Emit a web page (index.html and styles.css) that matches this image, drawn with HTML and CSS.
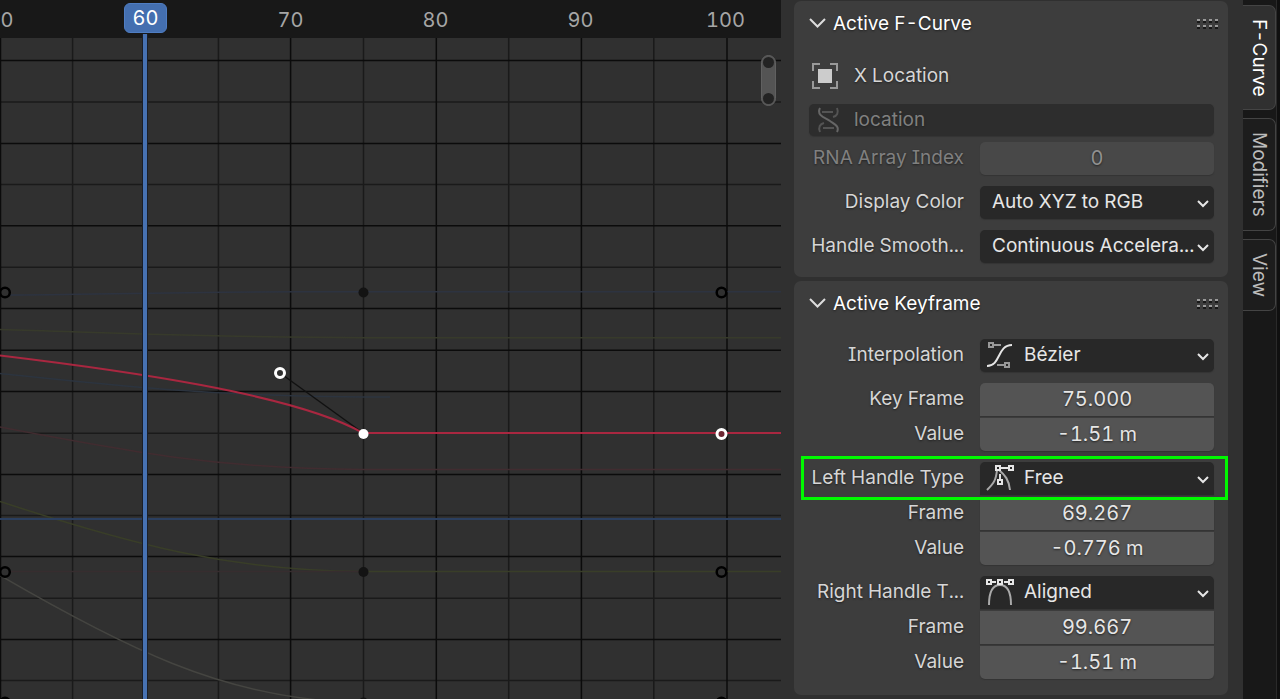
FILE: index.html
```html
<!DOCTYPE html>
<html lang="en">
<head>
<meta charset="utf-8">
<title>Graph Editor</title>
<link rel="stylesheet" href="styles.css">
</head>
<body>
<main class="editor">
  <section class="graph" aria-label="F-Curve graph">
    <svg class="plot" aria-hidden="true">
      <g stroke="#1a1a1a" stroke-width="1.500">
        <path d="M0 102H2000M0 184.500H2000M0 267.300H2000M0 433.300H2000M0 515.500H2000M0 598.300H2000M0 680.500H2000M72.600 38V1200M218.400 38V1200M363.500 38V1200M508.700 38V1200M653.800 38V1200"/>
      </g>
      <g stroke="#0b0b0b" stroke-width="1.500">
        <path d="M0 60.500H2000M0 143.400H2000M0 225.700H2000M0 308.500H2000M0 350.300H2000M0 391.600H2000M0 474.400H2000M0 556.600H2000M0 639.400H2000M.5 38V1200M290.600 38V1200M436.300 38V1200M581.400 38V1200M727 38V1200"/>
      </g>
      <g fill="none" stroke-width="1.500">
        <path stroke="#2d3340" d="M0 295C90 295 150 292 300 291.800H2000"/>
        <path stroke="#373a2b" d="M0 329.500C120 333 220 337.500 363 337.700H2000"/>
        <path stroke="#2c343f" d="M0 373.500C90 383 200 396 363 397H390"/>
        <path stroke="#412c30" d="M0 427C130 452 220 469 363 469.500H2000"/>
        <path stroke="#393e28" d="M0 501.500C130 544 230 571 363 571.500H2000"/>
        <path stroke="#372d2f" d="M8 571.500H363"/>
        <path stroke="#454541" d="M0 575.500C130 651 220 693 330 701"/>
        <path stroke="#2b3f5f" stroke-width="2" d="M0 519H2000"/>
        <path stroke="#111" d="M280 373 363 433"/>
        <path stroke="#a92740" stroke-width="2" d="M0 355.500C120 370 295 394 363 433H2000"/>
      </g>
      <g fill="#303030" stroke="#000" stroke-width="2.500">
        <circle cx="5" cy="292.500" r="4.800"/>
        <circle cx="721.500" cy="292.500" r="4.800"/>
        <circle cx="5" cy="572" r="4.800"/>
        <circle cx="721.500" cy="572" r="4.800"/>
        <circle cx="5" cy="702.500" r="4.800"/>
        <circle cx="721.500" cy="702.500" r="4.800"/>
      </g>
      <g fill="#131313">
        <circle cx="363.500" cy="292.500" r="5"/>
        <circle cx="363.500" cy="572" r="5"/>
        <circle cx="363.500" cy="702.500" r="5"/>
      </g>
      <g stroke="#fff" stroke-width="3">
        <circle cx="280" cy="373" r="4.500" fill="#303030"/>
        <circle cx="721.500" cy="434" r="4.500" fill="#6d2733"/>
      </g>
      <circle cx="363.500" cy="434" r="5" fill="#fff"/>
      <path stroke="#1b1f27" stroke-width="6" d="M145 34V1200"/>
      <path stroke="#4772b3" stroke-width="4" d="M145 34V1200"/>
    </svg>
    <div class="ruler">
      <span>50</span><span class="current"><b>60</b></span><span>70</span><span>80</span><span>90</span><span>100</span>
    </div>
    <div class="scroller"><i></i><i></i></div>
  </section>

  <aside class="sidebar">
    <section class="panel">
      <h2><button class="heading" type="button" aria-expanded="true">
        <svg width="18" height="12" viewBox="0 0 18 12"><path d="M1 2 8.500 9.500 16 2"/></svg>
        <span>Active F-Curve</span>
        <svg class="grip" width="22" height="11" viewBox="0 0 22 11"><path class="dark" d="M0 4h21M0 10h21"/><path class="dots" d="M0 2h21M0 8h21"/></svg>
      </button></h2>
      <div class="title">
        <svg width="26" height="26" viewBox="0 0 26 26"><path d="M1 8V1h7M18 1h7v7M25 18v7h-7M8 25H1v-7" fill="none" stroke="#999" stroke-width="2"/><path d="M6 6h14v14H6z" fill="#ccc"/></svg>
        <span>X Location</span>
      </div>
      <div class="path">
        <svg width="24" height="26" viewBox="0 0 24 26" fill="none" stroke="#545454" stroke-width="2"><path stroke="#666" d="M3 1C-1 9 9 11 13 14s10 5 7 11"/><path d="M20 1c2 5 0 8-4 9M3 25c-2-5 0-8 4-9M5 5h11M6 21h11"/></svg>
        <input type="text" value="location" aria-label="RNA Path" disabled>
      </div>
      <div class="row index">
        <label for="index">RNA Array Index</label>
        <input id="index" class="number" type="text" value="0" disabled>
      </div>
      <div class="row">
        <label for="color">Display Color</label>
        <div class="menu"><select id="color"><option>Auto XYZ to RGB</option></select>
          <svg class="arrow" width="14" height="10" viewBox="0 0 14 10"><path d="m2 2 5 5 5-5"/></svg></div>
      </div>
      <div class="row">
        <label for="smooth">Handle Smooth...</label>
        <div class="menu"><select id="smooth"><option>Continuous Accelera...</option></select>
          <svg class="arrow" width="14" height="10" viewBox="0 0 14 10"><path d="m2 2 5 5 5-5"/></svg></div>
      </div>
    </section>

    <section class="panel">
      <h2><button class="heading" type="button" aria-expanded="true">
        <svg width="18" height="12" viewBox="0 0 18 12"><path d="M1 2 8.500 9.500 16 2"/></svg>
        <span>Active Keyframe</span>
        <svg class="grip" width="22" height="11" viewBox="0 0 22 11"><path class="dark" d="M0 4h21M0 10h21"/><path class="dots" d="M0 2h21M0 8h21"/></svg>
      </button></h2>
      <div class="row first">
        <label for="interp">Interpolation</label>
        <div class="menu icon">
          <svg class="glyph" width="28" height="28" viewBox="0 0 28 28"><g stroke="#999"><path d="M3 2h4v4H3zM7 4h8M19 22h4v4h-4zM11 24h8"/></g><path d="M1 25C15 25 11 4 26 4"/></svg>
          <select id="interp"><option>Bézier</option></select>
          <svg class="arrow" width="14" height="10" viewBox="0 0 14 10"><path d="m2 2 5 5 5-5"/></svg></div>
      </div>
      <div class="stack">
        <div class="row"><label for="key">Key Frame</label><input id="key" class="number" type="text" value="75.000"></div>
        <div class="row"><label for="val">Value</label><input id="val" class="number" type="text" value="-1.51 m"></div>
      </div>
      <div class="stack marked">
        <div class="row">
          <label for="left">Left Handle Type</label>
          <div class="menu icon">
            <svg class="glyph" width="28" height="28" viewBox="0 0 28 28"><g stroke="#aaa"><path d="M1 26C8 19 10 16 11 6M13 6c6 5 10 10 11 20"/></g><path d="M10 2h4v4h-4zM23 2h4v4h-4zM14 4h9M12 16h4v4h-4zM14 16v-6"/></svg>
            <select id="left"><option>Free</option></select>
            <svg class="arrow" width="14" height="10" viewBox="0 0 14 10"><path d="m2 2 5 5 5-5"/></svg></div>
        </div>
        <div class="row"><label for="lf">Frame</label><input id="lf" class="number" type="text" value="69.267"></div>
        <div class="row"><label for="lv">Value</label><input id="lv" class="number" type="text" value="-0.776 m"></div>
      </div>
      <div class="stack">
        <div class="row">
          <label for="right">Right Handle T...</label>
          <div class="menu icon">
            <svg class="glyph" width="28" height="28" viewBox="0 0 28 28"><g stroke="#aaa"><path d="M3 27C3 14 7 7 14 7s11 7 11 20"/></g><path d="M1 2h4v4H1zM12 2h4v4h-4zM23 2h4v4h-4zM5 4h5M18 4h5"/></svg>
            <select id="right"><option>Aligned</option></select>
            <svg class="arrow" width="14" height="10" viewBox="0 0 14 10"><path d="m2 2 5 5 5-5"/></svg></div>
        </div>
        <div class="row"><label for="rf">Frame</label><input id="rf" class="number" type="text" value="99.667"></div>
        <div class="row"><label for="rv">Value</label><input id="rv" class="number" type="text" value="-1.51 m"></div>
      </div>
    </section>
  </aside>

  <nav class="tabs" aria-label="Sidebar tabs">
    <button class="tab active" type="button">F-Curve</button>
    <button class="tab" type="button">Modifiers</button>
    <button class="tab" type="button">View</button>
  </nav>
</main>
</body>
</html>
```
FILE: styles.css
```css
*, *::after { box-sizing: border-box; }

body {
  margin: 0;
  background: #303030;
  color: #d6d6d6;
  font: 19px/24px Inter, "Liberation Sans", sans-serif;
  font-feature-settings: "cv08", "tnum";
}

button, input, select { margin: 0; font: inherit; font-feature-settings: inherit; color: inherit; }
h2 { margin: 0; font: inherit; }

.editor {
  display: flex;
  height: 100vh;
  min-height: 699px;
  overflow: hidden;
}

.graph {
  position: relative;
  flex: 1;
  min-width: 0;
  overflow: hidden;
}

.plot {
  position: absolute;
  inset: 0;
  width: 100%;
  height: 100%;
}

.ruler {
  display: flex;
  height: 38px;
  background: #181818;
  color: #a6a6a6;
  font-size: 20px;
}

.ruler span {
  position: relative;
  flex: none;
  width: 145px;
  padding-top: 8px;
  text-align: center;
}

.ruler span:first-child { margin-left: -72px; }

.ruler .current { padding-top: 3px; }

.ruler b {
  display: inline-block;
  width: 43px;
  padding: 2px 0;
  border: 1px solid #4f7dc2;
  border-radius: 6px;
  background: #446fb0;
  color: #fff;
  font-weight: 400;
}

.scroller {
  position: absolute;
  top: 55px;
  right: 5px;
  display: flex;
  flex-direction: column;
  justify-content: space-between;
  width: 15px;
  height: 51px;
  padding: 1px;
  border: 1px solid #606060;
  border-radius: 8px;
  background: #545454;
}

.scroller i {
  width: 11px;
  height: 11px;
  border-radius: 50%;
  background: #232323;
}

.sidebar {
  display: flex;
  flex: none;
  flex-direction: column;
  gap: 4px;
  width: 462px;
  padding: 1px 15px 4px 13px;
}

.panel {
  padding: 0 14px 14px 15px;
  border-radius: 7px;
  background: #3d3d3d;
  text-shadow: 0 1px 2px #222;
}

.panel + .panel { padding-bottom: 16px; }

.heading {
  display: flex;
  align-items: center;
  gap: 6px;
  width: 100%;
  height: 44px;
  padding: 0;
  border: 0;
  background: none;
  color: #fff;
  text-align: left;
  text-shadow: inherit;
}

.heading span { flex: 1; padding-top: 1px; }
.heading svg { fill: none; stroke: #ddd; stroke-width: 2; }
.heading .grip { margin-right: -5px; stroke-dasharray: 3 3; }
.grip .dots { stroke: #999; }
.grip .dark { stroke: #181818; }

.title {
  display: flex;
  align-items: center;
  gap: 16px;
  height: 59px;
  padding: 2px 0 0 3px;
}

.path {
  display: flex;
  align-items: center;
  gap: 13px;
  height: 32px;
  margin-bottom: 6px;
  padding-left: 8px;
  border-radius: 5px;
  background: #2d2d2d;
  color: #808080;
  box-shadow: 0 1px 1px #343434;
}

.path input {
  flex: 1;
  min-width: 0;
  padding: 0;
  border: 0;
  background: none;
  text-shadow: inherit;
}

.row {
  display: grid;
  grid-template-columns: 155px 1fr;
  gap: 16px;
  align-items: center;
}

.row + .row { margin-top: 11px; }

.row label {
  padding-bottom: 1px;
  justify-self: end;
  white-space: nowrap;
}

.index { color: #808080; }

.number, .menu select {
  width: 100%;
  height: 33px;
  border: 0;
  border-radius: 5px;
  outline: 0;
  box-shadow: 0 1px 1px #343434;
}

.number {
  padding: 0 0 2px;
  background: #545454;
  color: #e6e6e6;
  font-size: 20px;
  text-align: center;
  text-shadow: inherit;
}

.index .number { background: #484848; color: #909090; }

.menu { position: relative; display: flex; }

.menu select {
  appearance: none;
  padding: 0 0 1px 12px;
  background: #282828;
  color: #e6e6e6;
}

.menu.icon select { padding-left: 44px; }

.menu svg {
  position: absolute;
  fill: none;
  stroke: #e6e6e6;
  stroke-width: 2;
  pointer-events: none;
}

.menu .arrow { right: 4px; top: 13px; }
.menu .glyph { left: 6px; top: 2px; }

.first { margin-top: 14px; }

.stack {
  position: relative;
  display: flex;
  flex-direction: column;
  gap: 2px;
  margin-top: 11px;
}

.stack .row { margin: 0; }
.stack .row:not(:last-child) .number,
.stack .row:not(:last-child) select { border-bottom-left-radius: 0; border-bottom-right-radius: 0; }
.stack .row:not(:first-child) .number { border-top-left-radius: 0; border-top-right-radius: 0; }

.marked::after {
  content: "";
  position: absolute;
  inset: -6px -14px auto -8px;
  height: 44px;
  border: 3px solid #00f800;
  pointer-events: none;
}

.tabs {
  display: flex;
  flex: none;
  flex-direction: column;
  align-items: flex-start;
  gap: 8px;
  width: 37px;
  padding-top: 5px;
  background: linear-gradient(90deg, #181818 33px, #2a2a2a 33px, #2a2a2a 34px, #101010 34px);
}

.tab {
  width: 33px;
  padding: 13px 4px;
  border: 1px solid #444;
  border-left: 0;
  border-radius: 0 7px 7px 0;
  background: #1d1d1d;
  color: #bbb;
  writing-mode: vertical-rl;
}

.tab.active {
  background: #303030;
  color: #fff;
}
```
